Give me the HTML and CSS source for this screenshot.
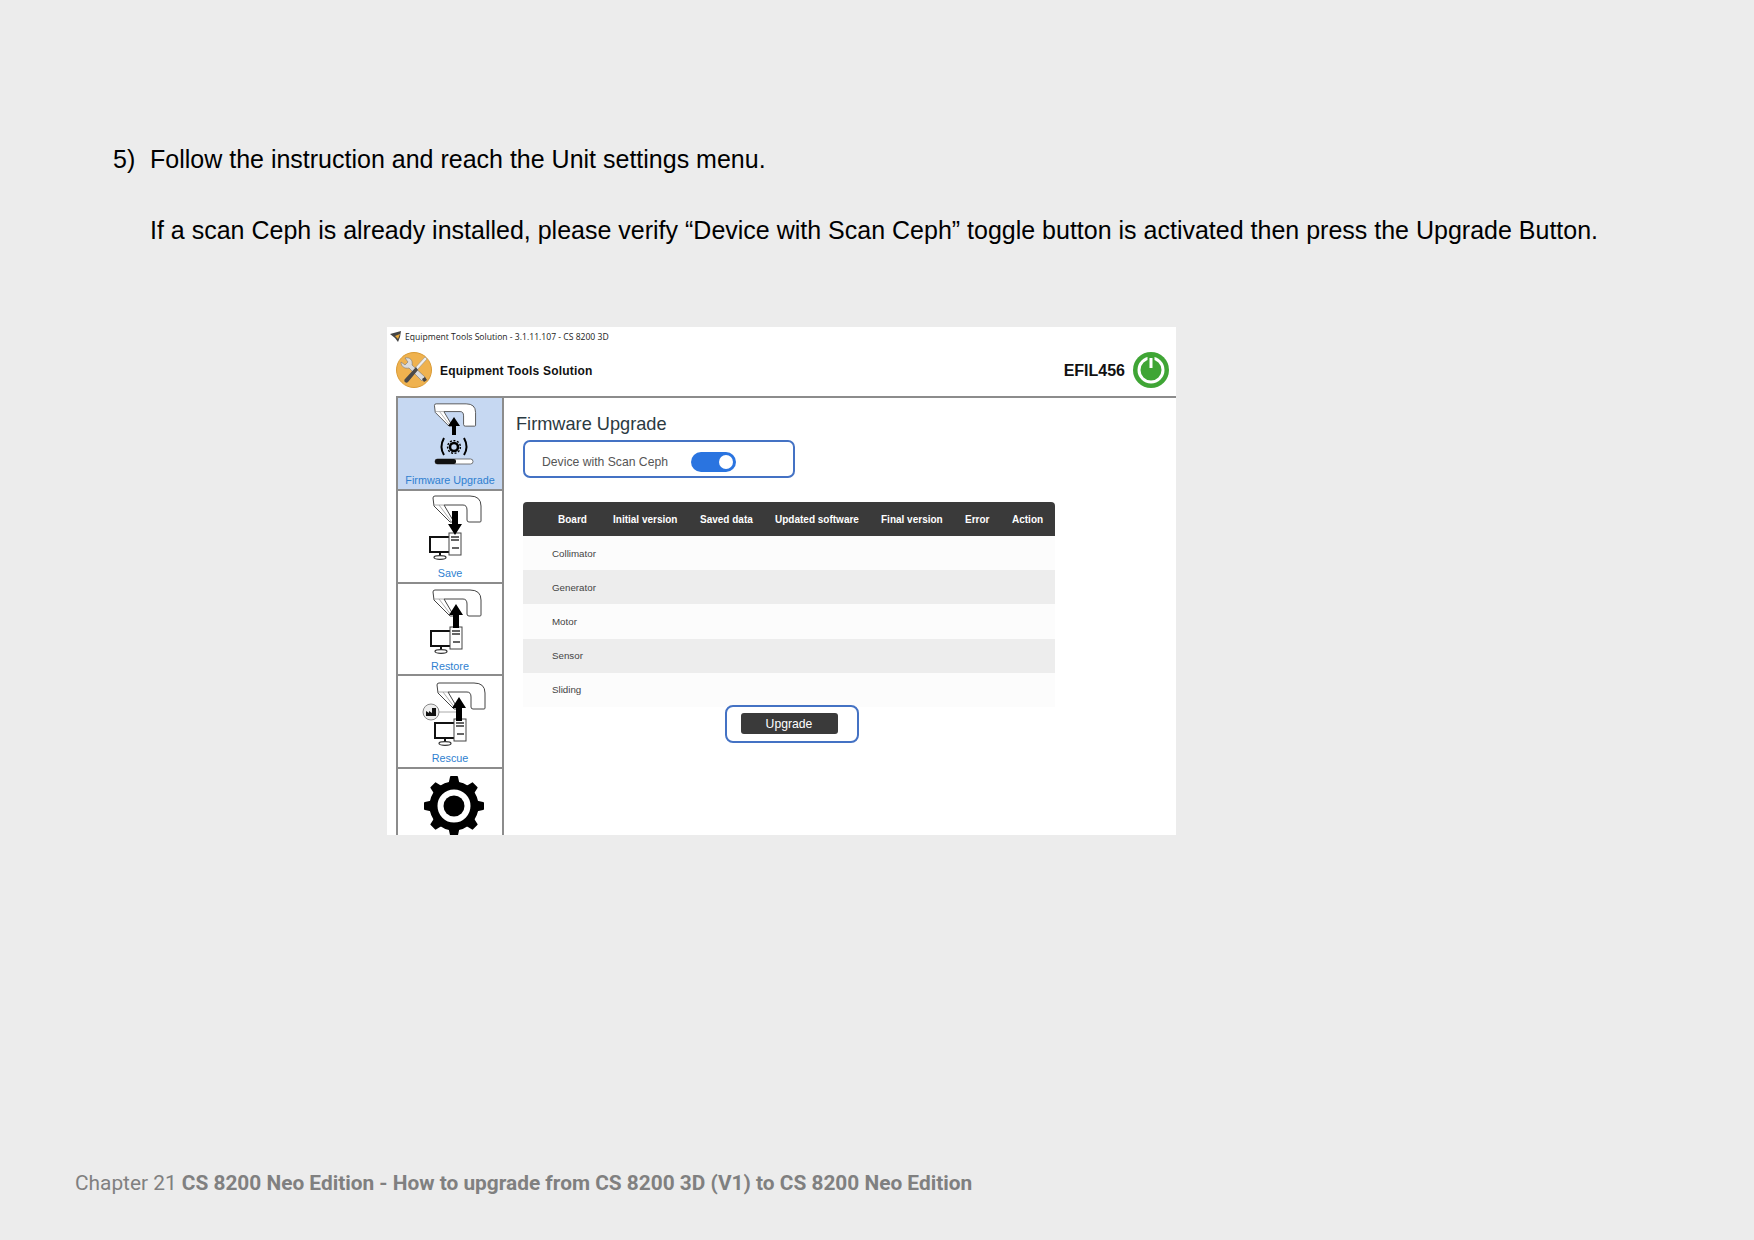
FILE: index.html
```html
<!DOCTYPE html>
<html lang="en">
<head>
  <meta charset="UTF-8">
  <title>Firmware Upgrade</title>
  <link rel="stylesheet" href="styles.css">
</head>
<body>
  <svg class="defs" width="0" height="0">
    <symbol id="unit" viewBox="0 0 50 28" overflow="visible">
      <path d="M1 3 Q1 1 3 1 H38 Q49 1 49 11 V26 Q49 27 48 27 H37 Q35 27 35 25 V15 Q35 10 31 10 H12 L22 27 H18 L2 11 Z" fill="#fff" stroke="#444" stroke-width="1"/>
      <path d="M2 10 H12 M7 10 L19 26" fill="none" stroke="#999" stroke-width=".8"/>
    </symbol>
    <symbol id="pc" viewBox="0 0 34 28" overflow="visible">
      <rect x="1" y="5" width="20" height="15" fill="#fff" stroke="#111" stroke-width="2"/>
      <path d="M11 20 V24" stroke="#111" stroke-width="2"/>
      <ellipse cx="11" cy="25.5" rx="6" ry="1.8" fill="#fff" stroke="#333" stroke-width="1.2"/>
      <rect x="20" y="1" width="12" height="22" fill="#fff" stroke="#444"/>
      <path d="M22 5 H30 M22 8 H30 M23 16 H30" stroke="#333" stroke-width="1.4"/>
    </symbol>
    <symbol id="tooth" viewBox="0 0 12 10" overflow="visible">
      <path d="M0 10 L2 1 Q2 0 3 0 H9 Q10 0 10 1 L12 10 Z"/>
    </symbol>
  </svg>

  <div class="page">
    <div class="step">
      <span class="step-num">5)</span>
      <div class="step-text">
        <p>Follow the instruction and reach the Unit settings menu.</p>
        <p>If a scan Ceph is already installed, please verify “Device with Scan Ceph” toggle button is activated then press the Upgrade Button.</p>
      </div>
    </div>

    <div class="shot">
      <div class="titlebar">
        <svg class="title-icon" viewBox="0 0 12 12"><path d="M0 3 L11 0 L10 6 L8 11 L5 7 Z" fill="#444"/><path d="M5 5 L10 3 L8 8 Z" fill="#e9a93a"/></svg>
        <span>Equipment Tools Solution - 3.1.11.107 - CS 8200 3D</span>
      </div>
      <div class="appbar">
        <svg class="logo" viewBox="0 0 36 36">
          <circle cx="18" cy="18" r="17.5" fill="#efb24f" stroke="#d99a35"/>
          <path d="M5 10 L9 13 L12 10 L9 6 C14 5 17 8 16 13 L29 25 L26 29 L13 16 C8 17 5 14 5 10 Z" fill="#dcdcdc" stroke="#777" stroke-width=".6"/>
          <path d="M26 27 L29 25 L31 28 L28 30 Z" fill="#444"/>
          <path d="M29 5 L31 7 L21 18 L19 16 Z" fill="#eee" stroke="#888" stroke-width=".5"/>
          <path d="M20 15 L22 18 L12 30 C10 32 7 29 9 27 Z" fill="#4a4a4a"/>
        </svg>
        <span class="app-name">Equipment Tools Solution</span>
        <span class="unit-id">EFIL456</span>
        <svg class="power" viewBox="0 0 36 36">
          <circle cx="18" cy="18" r="18" fill="#3fa535"/>
          <circle cx="18" cy="18" r="12" fill="none" stroke="#fff" stroke-width="3"/>
          <path d="M18 3 V17" stroke="#3fa535" stroke-width="7"/>
          <path d="M18 6 V16" stroke="#fff" stroke-width="3"/>
        </svg>
      </div>
      <div class="app-body">
        <nav class="sidebar">
          <div class="nav-item active">
            <svg class="nav-art" viewBox="0 0 104 70">
              <use href="#unit" x="35" y="5" width="44" height="24"/>
              <path d="M56 19 L62 28 H58 V37 H54 V28 H50 Z"/>
              <path d="M46 40 Q41 49 46 57 M66 40 Q71 49 66 57" fill="none" stroke="#000" stroke-width="2"/>
              <circle cx="56" cy="49" r="4" fill="none" stroke="#000" stroke-width="2.6"/>
              <circle cx="56" cy="49" r="6.4" fill="none" stroke="#000" stroke-width="1.4" stroke-dasharray="2 1.6"/>
              <rect x="37" y="61" width="38" height="5" rx="2.5" fill="#fff" stroke="#555" stroke-width=".8"/>
              <rect x="37" y="61" width="21" height="5" rx="2" fill="#111"/>
            </svg>
            <span>Firmware Upgrade</span>
          </div>
          <div class="nav-item">
            <svg class="nav-art" viewBox="0 0 104 70">
              <use href="#unit" x="34" y="4" width="50" height="28"/>
              <use href="#pc" x="31" y="41" width="34" height="28"/>
              <path d="M54 20 H60 V33 H64 L57 44 L50 33 H54 Z"/>
            </svg>
            <span>Save</span>
          </div>
          <div class="nav-item">
            <svg class="nav-art" viewBox="0 0 104 70">
              <use href="#unit" x="34" y="5" width="50" height="28"/>
              <use href="#pc" x="32" y="42" width="34" height="28"/>
              <path d="M58 20 L65 31 H61 V44 H55 V31 H51 Z"/>
            </svg>
            <span>Restore</span>
          </div>
          <div class="nav-item">
            <svg class="nav-art" viewBox="0 0 104 70">
              <use href="#unit" x="38" y="6" width="50" height="28"/>
              <path d="M41 36 H60" stroke="#aaa"/>
              <use href="#pc" x="36" y="42" width="34" height="28"/>
              <path d="M61 21 L68 32 H64 V45 H58 V32 H54 Z"/>
              <circle cx="33" cy="36" r="8" fill="#eee" stroke="#888"/>
              <path d="M28 40 V35 L31 37 V35 L34 37 V32 H38 V40 Z" fill="#111"/>
            </svg>
            <span>Rescue</span>
          </div>
          <div class="nav-item">
            <svg class="nav-art" viewBox="0 0 104 70">
              <g transform="translate(56 37)">
                <use href="#tooth" x="-6" y="-30" width="12" height="10"/>
                <use href="#tooth" x="-6" y="-30" width="12" height="10" transform="rotate(45)"/>
                <use href="#tooth" x="-6" y="-30" width="12" height="10" transform="rotate(90)"/>
                <use href="#tooth" x="-6" y="-30" width="12" height="10" transform="rotate(135)"/>
                <use href="#tooth" x="-6" y="-30" width="12" height="10" transform="rotate(180)"/>
                <use href="#tooth" x="-6" y="-30" width="12" height="10" transform="rotate(225)"/>
                <use href="#tooth" x="-6" y="-30" width="12" height="10" transform="rotate(270)"/>
                <use href="#tooth" x="-6" y="-30" width="12" height="10" transform="rotate(315)"/>
                <circle r="20.5" fill="none" stroke="#000" stroke-width="8"/>
                <circle r="10.5"/>
              </g>
            </svg>
          </div>
        </nav>
        <main class="content">
          <h1>Firmware Upgrade</h1>
          <div class="toggle-box">
            <span>Device with Scan Ceph</span>
            <span class="toggle"></span>
          </div>
          <table class="boards">
            <colgroup>
              <col class="w-board"><col class="w-initial"><col class="w-saved"><col class="w-updated"><col class="w-final"><col class="w-error"><col class="w-action">
            </colgroup>
            <thead>
              <tr>
                <th class="col-board">Board</th>
                <th>Initial version</th>
                <th>Saved data</th>
                <th>Updated software</th>
                <th>Final version</th>
                <th>Error</th>
                <th>Action</th>
              </tr>
            </thead>
            <tbody>
              <tr><td colspan="7">Collimator</td></tr>
              <tr><td colspan="7">Generator</td></tr>
              <tr><td colspan="7">Motor</td></tr>
              <tr><td colspan="7">Sensor</td></tr>
              <tr><td colspan="7">Sliding</td></tr>
            </tbody>
          </table>
          <div class="upgrade-box">
            <button class="upgrade">Upgrade</button>
          </div>
        </main>
      </div>
    </div>

    <footer class="footer">Chapter 21 <b>CS 8200 Neo Edition - How to upgrade from CS 8200 3D (V1) to CS 8200 Neo Edition</b></footer>
  </div>
</body>
</html>
```

FILE: styles.css
```css
*{
  margin:0;
  padding:0;
  box-sizing:border-box;
}
html,body{
  width:1754px;
  height:1240px;
  overflow:hidden;
}
body{
  background:#ececec;
  font-family:"Liberation Sans",Arial,sans-serif;
  color:#000;
}
.defs{
  display:block;
  height:0;
}
.page{
  height:1240px;
  padding-top:144px;
  display:flex;
  flex-direction:column;
}
.step{
  display:flex;
  padding-left:113px;
  font-size:25px;
  line-height:30px;
}
.step-num{
  width:37px;
}
.step-text p+p{
  margin-top:41px;
}
.shot{
  width:789px;
  height:508px;
  margin:82px 0 0 387px;
  background:#fff;
  overflow:hidden;
  display:flex;
  flex-direction:column;
}

/* title and header */
.titlebar{
  height:19px;
  flex-shrink:0;
  display:flex;
  align-items:center;
  gap:3px;
  padding-left:3px;
  font-family:"Open Sans",sans-serif;
  font-size:8.6px;
  color:#222;
  white-space:nowrap;
}
.title-icon{
  width:12px;
  height:12px;
}
.appbar{
  height:52px;
  flex-shrink:0;
  margin-left:9px;
  display:flex;
  align-items:center;
  padding-right:7px;
  border-bottom:2px solid #8c8c8c;
}
.logo{
  width:36px;
  height:36px;
  margin-bottom:2px;
}
.app-name{
  margin-left:8px;
  font-size:12px;
  font-weight:bold;
  letter-spacing:.2px;
  color:#111;
}
.unit-id{
  margin-left:auto;
  font-size:16px;
  font-weight:bold;
  color:#111;
}
.power{
  width:36px;
  height:36px;
  margin:0 0 2px 8px;
}

/* left menu */
.app-body{
  flex:1;
  display:flex;
  min-height:0;
}
.sidebar{
  width:108px;
  margin-left:9px;
  border-left:2px solid #8c8c8c;
  border-right:2px solid #8c8c8c;
  flex-shrink:0;
}
.nav-item{
  height:92.4px;
  border-bottom:2px solid #8c8c8c;
  display:flex;
  flex-direction:column;
  align-items:center;
  font-size:10.8px;
  line-height:14px;
  color:#2f7fd0;
}
.nav-item.active{
  height:93.4px;
  background:#c6d8f2;
}
.nav-art{
  width:104px;
  height:70px;
  flex-shrink:0;
  margin-bottom:5px;
}

/* main part */
.content{
  flex:1;
  padding:15px 0 0 12px;
}
.content h1{
  font-size:18.2px;
  font-weight:normal;
  color:#2b3a42;
  line-height:22px;
}
.toggle-box{
  width:272px;
  height:38px;
  margin:5px 0 0 7px;
  border:2px solid #4472c4;
  border-radius:7px;
  display:flex;
  align-items:center;
  padding:5px 0 0 17px;
  gap:23px;
  font-size:12.2px;
  color:#555;
}
.toggle{
  width:45px;
  height:20px;
  border-radius:10px;
  background:#2a74e0;
  position:relative;
}
.toggle::after{
  content:"";
  position:absolute;
  right:3px;
  top:3px;
  width:14px;
  height:14px;
  border-radius:50%;
  background:#fff;
}
.boards{
  width:532px;
  margin:24px 0 0 7px;
  border-collapse:collapse;
  table-layout:fixed;
  font-size:10px;
}
.w-board{width:90px;}
.w-initial{width:87px;}
.w-saved{width:75px;}
.w-updated{width:106px;}
.w-final{width:84px;}
.w-error{width:47px;}
.w-action{width:43px;}
.boards th{
  background:#3a3a3a;
  color:#fff;
  font-weight:bold;
  text-align:left;
  white-space:nowrap;
  height:34px;
}
.boards th.col-board{
  padding-left:35px;
}
.boards th:first-child{
  border-top-left-radius:4px;
}
.boards th:last-child{
  border-top-right-radius:4px;
}
.boards td{
  height:34.2px;
  padding-left:29px;
  font-size:9.75px;
  color:#444;
}
.boards tbody tr:nth-child(odd){
  background:#fcfcfc;
}
.boards tbody tr:nth-child(even){
  background:#ededed;
}
.upgrade-box{
  width:134px;
  height:38px;
  margin:-2px 0 0 209px;
  position:relative;
  border:2px solid #4472c4;
  border-radius:8px;
  display:flex;
  align-items:center;
  justify-content:center;
}
.upgrade{
  width:97px;
  height:21px;
  margin-right:6px;
  background:#3a3a3a;
  color:#fff;
  border:none;
  border-radius:3px;
  font-family:"Liberation Sans",Arial,sans-serif;
  font-size:12.2px;
}
.footer{
  margin-top:auto;
  margin-bottom:45px;
  padding-left:75px;
  font-family:Roboto,sans-serif;
  font-size:20.85px;
  line-height:24px;
  color:#808080;
}
```
